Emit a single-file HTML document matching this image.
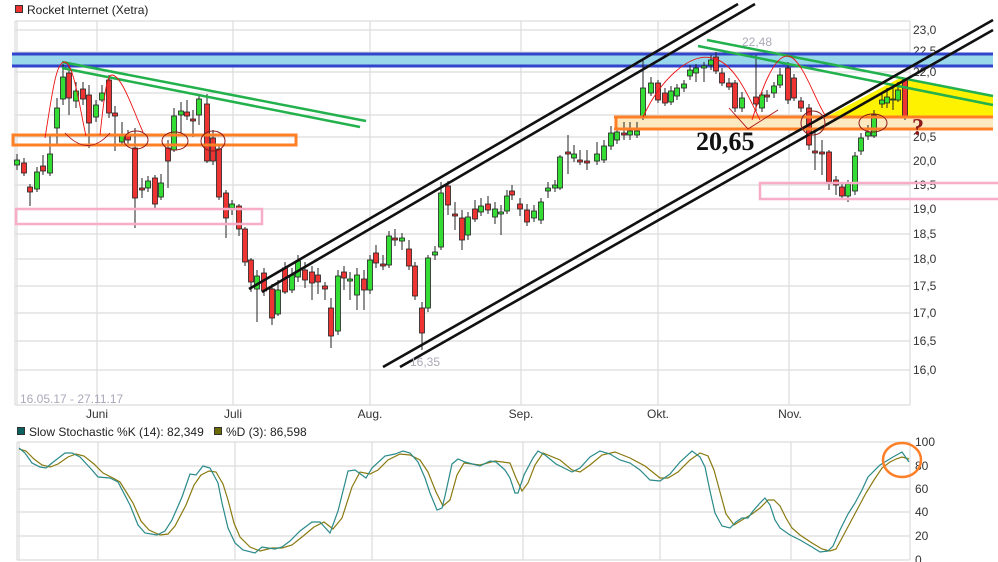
<!DOCTYPE html>
<html><head><meta charset="utf-8"><style>
html,body{margin:0;padding:0;background:#fff;width:998px;height:562px;overflow:hidden}
svg{display:block;font-family:"Liberation Sans",sans-serif}
.g{fill:#33dd33;stroke:#222;stroke-width:0.8}
.r{fill:#ee3333;stroke:#222;stroke-width:0.8}
.w{stroke:#222;stroke-width:1}
.grid{stroke:#dcdcdc;stroke-width:1.2}
.ax{font-size:12px;fill:#333}
</style></head><body>
<svg width="998" height="562" viewBox="0 0 998 562">
<rect x="15.5" y="5.5" width="7" height="7" fill="#e33" stroke="#333" stroke-width="1"/>
<text x="27" y="14" font-size="12" fill="#222">Rocket Internet (Xetra)</text>
<g class="grid">
<line x1="15" y1="21" x2="910" y2="21"/>
<line x1="15" y1="30" x2="910" y2="30"/><line x1="15" y1="52" x2="910" y2="52"/><line x1="15" y1="72" x2="910" y2="72"/><line x1="15" y1="93" x2="910" y2="93"/><line x1="15" y1="115" x2="910" y2="115"/><line x1="15" y1="137" x2="910" y2="137"/><line x1="15" y1="162" x2="910" y2="162"/><line x1="15" y1="185" x2="910" y2="185"/><line x1="15" y1="209" x2="910" y2="209"/><line x1="15" y1="234" x2="910" y2="234"/><line x1="15" y1="259" x2="910" y2="259"/><line x1="15" y1="286" x2="910" y2="286"/><line x1="15" y1="313" x2="910" y2="313"/><line x1="15" y1="341" x2="910" y2="341"/><line x1="15" y1="370" x2="910" y2="370"/>
<line x1="15" y1="405" x2="910" y2="405"/>
<line x1="15" y1="21" x2="15" y2="405"/><line x1="17" y1="21" x2="17" y2="405"/>
<line x1="97" y1="21" x2="97" y2="405"/><line x1="233" y1="21" x2="233" y2="405"/><line x1="370" y1="21" x2="370" y2="405"/><line x1="521" y1="21" x2="521" y2="405"/><line x1="658" y1="21" x2="658" y2="405"/><line x1="789" y1="21" x2="789" y2="405"/><line x1="910" y1="21" x2="910" y2="405"/>
</g>
<g class="ax">
<text x="913" y="34">23,0</text><text x="913" y="55">22,5</text><text x="913" y="76">22,0</text><text x="913" y="97">21,5</text><text x="913" y="119">21,0</text><text x="913" y="141">20,5</text><text x="913" y="165">20,0</text><text x="913" y="189">19,5</text><text x="913" y="213">19,0</text><text x="913" y="238">18,5</text><text x="913" y="263">18,0</text><text x="913" y="290">17,5</text><text x="913" y="317">17,0</text><text x="913" y="345">16,5</text><text x="913" y="374">16,0</text>
</g>
<g class="ax" text-anchor="middle">
<text x="97" y="418">Juni</text><text x="233" y="418">Juli</text><text x="370" y="418">Aug.</text><text x="521" y="418">Sep.</text><text x="658" y="418">Okt.</text><text x="790" y="418">Nov.</text>
</g>
<text x="20" y="403" font-size="12" fill="#a9a9b9">16.05.17 - 27.11.17</text>

<rect x="12" y="54" width="981" height="12" fill="#99d8ea"/>
<line x1="12" y1="54" x2="993" y2="54" stroke="#3344cc" stroke-width="3"/>
<line x1="12" y1="66" x2="993" y2="66" stroke="#3344cc" stroke-width="3"/>
<rect x="616" y="117" width="377" height="12" fill="#fde9c0"/>
<polygon points="826,117 900,78 993,96 993,117" fill="#fff200"/>

<g id="c">
<line class="w" x1="17" y1="154" x2="17" y2="170"/><rect class="g" x="14.5" y="160" width="5" height="5"/>
<line class="w" x1="24" y1="158" x2="24" y2="176"/><rect class="r" x="21.5" y="163" width="5" height="10"/>
<line class="w" x1="30" y1="184" x2="30" y2="206"/><rect class="r" x="27.5" y="187" width="5" height="5"/>
<line class="w" x1="37" y1="167" x2="37" y2="192"/><rect class="g" x="34.5" y="172" width="5" height="17"/>
<line class="w" x1="43" y1="155" x2="43" y2="175"/><rect class="r" x="40.5" y="166" width="5" height="5"/>
<line class="w" x1="50" y1="135" x2="50" y2="176"/><rect class="g" x="47.5" y="154" width="5" height="19"/>
<line class="w" x1="57" y1="98" x2="57" y2="144"/><rect class="g" x="54.5" y="108" width="5" height="20"/>
<line class="w" x1="63" y1="64" x2="63" y2="105"/><rect class="g" x="60.5" y="77" width="5" height="22"/>
<line class="w" x1="69" y1="66" x2="69" y2="115"/><rect class="r" x="66.5" y="73" width="5" height="25"/>
<line class="w" x1="76" y1="82" x2="76" y2="108"/><rect class="g" x="73.5" y="91" width="5" height="10"/>
<line class="w" x1="83" y1="82" x2="83" y2="105"/><rect class="r" x="80.5" y="89" width="5" height="10"/>
<line class="w" x1="89" y1="85" x2="89" y2="148"/><rect class="r" x="86.5" y="95" width="5" height="28"/>
<line class="w" x1="96" y1="100" x2="96" y2="122"/><rect class="g" x="93.5" y="105" width="5" height="12"/>
<line class="w" x1="102" y1="85" x2="102" y2="102"/><rect class="g" x="99.5" y="93" width="5" height="7"/>
<line class="w" x1="109" y1="75" x2="109" y2="118"/><rect class="r" x="106.5" y="80" width="5" height="33"/>
<line class="w" x1="115" y1="106" x2="115" y2="151"/><rect class="r" x="112.5" y="113" width="5" height="3"/>
<line class="w" x1="122" y1="122" x2="122" y2="146"/><rect class="g" x="119.5" y="136" width="5" height="6"/>
<line class="w" x1="128" y1="130" x2="128" y2="144"/><rect class="r" x="125.5" y="136" width="5" height="4"/>
<line class="w" x1="135" y1="128" x2="135" y2="228"/><rect class="r" x="132.5" y="148" width="5" height="50"/>
<line class="w" x1="142" y1="178" x2="142" y2="198"/><rect class="r" x="139.5" y="188" width="5" height="2"/>
<line class="w" x1="148" y1="176" x2="148" y2="192"/><rect class="g" x="145.5" y="181" width="5" height="7"/>
<line class="w" x1="155" y1="175" x2="155" y2="208"/><rect class="r" x="152.5" y="178" width="5" height="26"/>
<line class="w" x1="161" y1="174" x2="161" y2="200"/><rect class="g" x="158.5" y="183" width="5" height="14"/>
<line class="w" x1="168" y1="140" x2="168" y2="188"/><rect class="r" x="165.5" y="148" width="5" height="13"/>
<line class="w" x1="174" y1="108" x2="174" y2="152"/><rect class="g" x="171.5" y="116" width="5" height="34"/>
<line class="w" x1="181" y1="102" x2="181" y2="133"/><rect class="g" x="178.5" y="111" width="5" height="4"/>
<line class="w" x1="187" y1="100" x2="187" y2="120"/><rect class="r" x="184.5" y="112" width="5" height="4"/>
<line class="w" x1="193" y1="110" x2="193" y2="137"/><rect class="r" x="190.5" y="119" width="5" height="2"/>
<line class="w" x1="199" y1="94" x2="199" y2="125"/><rect class="g" x="196.5" y="99" width="5" height="16"/>
<line class="w" x1="207" y1="94" x2="207" y2="163"/><rect class="r" x="204.5" y="104" width="5" height="57"/>
<line class="w" x1="213" y1="130" x2="213" y2="165"/><rect class="r" x="210.5" y="138" width="5" height="23"/>
<line class="w" x1="219" y1="146" x2="219" y2="200"/><rect class="r" x="216.5" y="149" width="5" height="48"/>
<line class="w" x1="226" y1="190" x2="226" y2="238"/><rect class="r" x="223.5" y="193" width="5" height="25"/>
<line class="w" x1="232" y1="200" x2="232" y2="215"/><rect class="g" x="229.5" y="204" width="5" height="4"/>
<line class="w" x1="239" y1="204" x2="239" y2="236"/><rect class="r" x="236.5" y="206" width="5" height="23"/>
<line class="w" x1="245" y1="227" x2="245" y2="266"/><rect class="r" x="242.5" y="229" width="5" height="33"/>
<line class="w" x1="251" y1="258" x2="251" y2="292"/><rect class="r" x="248.5" y="260" width="5" height="22"/>
<line class="w" x1="257" y1="270" x2="257" y2="322"/><rect class="g" x="254.5" y="276" width="5" height="13"/>
<line class="w" x1="264" y1="268" x2="264" y2="296"/><rect class="r" x="261.5" y="273" width="5" height="18"/>
<line class="w" x1="272" y1="284" x2="272" y2="325"/><rect class="r" x="269.5" y="289" width="5" height="29"/>
<line class="w" x1="278" y1="280" x2="278" y2="316"/><rect class="g" x="275.5" y="290" width="5" height="24"/>
<line class="w" x1="285" y1="262" x2="285" y2="294"/><rect class="r" x="282.5" y="268" width="5" height="24"/>
<line class="w" x1="292" y1="268" x2="292" y2="293"/><rect class="g" x="289.5" y="275" width="5" height="15"/>
<line class="w" x1="298" y1="255" x2="298" y2="282"/><rect class="g" x="295.5" y="261" width="5" height="16"/>
<line class="w" x1="305" y1="262" x2="305" y2="288"/><rect class="r" x="302.5" y="270" width="5" height="10"/>
<line class="w" x1="312" y1="266" x2="312" y2="300"/><rect class="r" x="309.5" y="272" width="5" height="11"/>
<line class="w" x1="318" y1="268" x2="318" y2="294"/><rect class="r" x="315.5" y="275" width="5" height="7"/>
<line class="w" x1="325" y1="282" x2="325" y2="300"/><rect class="r" x="322.5" y="286" width="5" height="3"/>
<line class="w" x1="331" y1="298" x2="331" y2="348"/><rect class="r" x="328.5" y="308" width="5" height="28"/>
<line class="w" x1="338" y1="270" x2="338" y2="335"/><rect class="g" x="335.5" y="276" width="5" height="55"/>
<line class="w" x1="344" y1="266" x2="344" y2="290"/><rect class="r" x="341.5" y="272" width="5" height="6"/>
<line class="w" x1="350" y1="272" x2="350" y2="300"/><rect class="g" x="347.5" y="279" width="5" height="2"/>
<line class="w" x1="357" y1="268" x2="357" y2="310"/><rect class="g" x="354.5" y="275" width="5" height="20"/>
<line class="w" x1="364" y1="270" x2="364" y2="310"/><rect class="r" x="361.5" y="279" width="5" height="11"/>
<line class="w" x1="370" y1="255" x2="370" y2="294"/><rect class="g" x="367.5" y="260" width="5" height="30"/>
<line class="w" x1="376" y1="245" x2="376" y2="268"/><rect class="r" x="373.5" y="253" width="5" height="10"/>
<line class="w" x1="383" y1="255" x2="383" y2="270"/><rect class="r" x="380.5" y="264" width="5" height="2"/>
<line class="w" x1="389" y1="231" x2="389" y2="268"/><rect class="g" x="386.5" y="236" width="5" height="29"/>
<line class="w" x1="395" y1="229" x2="395" y2="246"/><rect class="r" x="392.5" y="238" width="5" height="2"/>
<line class="w" x1="402" y1="233" x2="402" y2="250"/><rect class="g" x="399.5" y="238" width="5" height="3"/>
<line class="w" x1="409" y1="240" x2="409" y2="270"/><rect class="r" x="406.5" y="249" width="5" height="17"/>
<line class="w" x1="415" y1="262" x2="415" y2="300"/><rect class="r" x="412.5" y="266" width="5" height="30"/>
<line class="w" x1="422" y1="302" x2="422" y2="350"/><rect class="r" x="419.5" y="308" width="5" height="25"/>
<line class="w" x1="428" y1="255" x2="428" y2="312"/><rect class="g" x="425.5" y="258" width="5" height="50"/>
<line class="w" x1="435" y1="246" x2="435" y2="260"/><rect class="g" x="432.5" y="252" width="5" height="3"/>
<line class="w" x1="441" y1="182" x2="441" y2="250"/><rect class="g" x="438.5" y="193" width="5" height="54"/>
<line class="w" x1="448" y1="181" x2="448" y2="215"/><rect class="r" x="445.5" y="186" width="5" height="19"/>
<line class="w" x1="455" y1="202" x2="455" y2="230"/><rect class="r" x="452.5" y="214" width="5" height="2"/>
<line class="w" x1="462" y1="210" x2="462" y2="250"/><rect class="r" x="459.5" y="218" width="5" height="22"/>
<line class="w" x1="468" y1="212" x2="468" y2="240"/><rect class="g" x="465.5" y="217" width="5" height="18"/>
<line class="w" x1="475" y1="200" x2="475" y2="222"/><rect class="r" x="472.5" y="209" width="5" height="10"/>
<line class="w" x1="481" y1="198" x2="481" y2="216"/><rect class="g" x="478.5" y="206" width="5" height="6"/>
<line class="w" x1="488" y1="196" x2="488" y2="214"/><rect class="r" x="485.5" y="204" width="5" height="6"/>
<line class="w" x1="495" y1="202" x2="495" y2="224"/><rect class="g" x="492.5" y="209" width="5" height="8"/>
<line class="w" x1="501" y1="205" x2="501" y2="235"/><rect class="g" x="498.5" y="212" width="5" height="2"/>
<line class="w" x1="507" y1="190" x2="507" y2="214"/><rect class="g" x="504.5" y="196" width="5" height="15"/>
<line class="w" x1="512" y1="185" x2="512" y2="200"/><rect class="r" x="509.5" y="191" width="5" height="4"/>
<line class="w" x1="520" y1="198" x2="520" y2="216"/><rect class="r" x="517.5" y="204" width="5" height="5"/>
<line class="w" x1="527" y1="204" x2="527" y2="226"/><rect class="r" x="524.5" y="210" width="5" height="12"/>
<line class="w" x1="534" y1="205" x2="534" y2="222"/><rect class="g" x="531.5" y="211" width="5" height="7"/>
<line class="w" x1="541" y1="198" x2="541" y2="224"/><rect class="g" x="538.5" y="202" width="5" height="18"/>
<line class="w" x1="548" y1="182" x2="548" y2="198"/><rect class="g" x="545.5" y="188" width="5" height="3"/>
<line class="w" x1="555" y1="180" x2="555" y2="192"/><rect class="g" x="552.5" y="185" width="5" height="3"/>
<line class="w" x1="560" y1="155" x2="560" y2="190"/><rect class="g" x="557.5" y="157" width="5" height="31"/>
<line class="w" x1="568" y1="135" x2="568" y2="174"/><rect class="r" x="565.5" y="152" width="5" height="2"/>
<line class="w" x1="574" y1="145" x2="574" y2="162"/><rect class="g" x="571.5" y="154" width="5" height="4"/>
<line class="w" x1="580" y1="150" x2="580" y2="165"/><rect class="r" x="577.5" y="160" width="5" height="2"/>
<line class="w" x1="587" y1="150" x2="587" y2="170"/><rect class="r" x="584.5" y="161" width="5" height="2"/>
<line class="w" x1="597" y1="142" x2="597" y2="165"/><rect class="g" x="594.5" y="154" width="5" height="7"/>
<line class="w" x1="604" y1="140" x2="604" y2="163"/><rect class="g" x="601.5" y="146" width="5" height="14"/>
<line class="w" x1="611" y1="126" x2="611" y2="150"/><rect class="g" x="608.5" y="133" width="5" height="13"/>
<line class="w" x1="617" y1="126" x2="617" y2="144"/><rect class="g" x="614.5" y="132" width="5" height="8"/>
<line class="w" x1="624" y1="122" x2="624" y2="140"/><rect class="r" x="621.5" y="133" width="5" height="2"/>
<line class="w" x1="630" y1="122" x2="630" y2="140"/><rect class="g" x="627.5" y="131" width="5" height="4"/>
<line class="w" x1="637" y1="122" x2="637" y2="138"/><rect class="g" x="634.5" y="131" width="5" height="4"/>
<line class="w" x1="643" y1="60" x2="643" y2="120"/><rect class="g" x="640.5" y="88" width="5" height="29"/>
<line class="w" x1="651" y1="77" x2="651" y2="96"/><rect class="g" x="648.5" y="83" width="5" height="10"/>
<line class="w" x1="658" y1="80" x2="658" y2="103"/><rect class="r" x="655.5" y="83" width="5" height="17"/>
<line class="w" x1="665" y1="88" x2="665" y2="106"/><rect class="r" x="662.5" y="93" width="5" height="10"/>
<line class="w" x1="671" y1="86" x2="671" y2="105"/><rect class="g" x="668.5" y="91" width="5" height="11"/>
<line class="w" x1="677" y1="84" x2="677" y2="100"/><rect class="g" x="674.5" y="88" width="5" height="8"/>
<line class="w" x1="684" y1="80" x2="684" y2="92"/><rect class="g" x="681.5" y="84" width="5" height="4"/>
<line class="w" x1="690" y1="65" x2="690" y2="80"/><rect class="g" x="687.5" y="70" width="5" height="6"/>
<line class="w" x1="696" y1="64" x2="696" y2="82"/><rect class="g" x="693.5" y="68" width="5" height="5"/>
<line class="w" x1="704" y1="62" x2="704" y2="82"/><rect class="g" x="701.5" y="66" width="5" height="2"/>
<line class="w" x1="711" y1="55" x2="711" y2="70"/><rect class="g" x="708.5" y="60" width="5" height="5"/>
<line class="w" x1="716" y1="52" x2="716" y2="74"/><rect class="r" x="713.5" y="57" width="5" height="14"/>
<line class="w" x1="722" y1="68" x2="722" y2="86"/><rect class="r" x="719.5" y="73" width="5" height="10"/>
<line class="w" x1="729" y1="78" x2="729" y2="90"/><rect class="r" x="726.5" y="83" width="5" height="4"/>
<line class="w" x1="735" y1="80" x2="735" y2="112"/><rect class="r" x="732.5" y="83" width="5" height="25"/>
<line class="w" x1="742" y1="92" x2="742" y2="112"/><rect class="g" x="739.5" y="98" width="5" height="10"/>
<line class="w" x1="756" y1="55" x2="756" y2="112"/><rect class="r" x="753.5" y="97" width="5" height="7"/>
<line class="w" x1="762" y1="92" x2="762" y2="112"/><rect class="g" x="759.5" y="95" width="5" height="13"/>
<line class="w" x1="767" y1="90" x2="767" y2="102"/><rect class="r" x="764.5" y="95" width="5" height="2"/>
<line class="w" x1="774" y1="82" x2="774" y2="98"/><rect class="g" x="771.5" y="86" width="5" height="7"/>
<line class="w" x1="780" y1="68" x2="780" y2="88"/><rect class="g" x="777.5" y="75" width="5" height="10"/>
<line class="w" x1="788" y1="62" x2="788" y2="104"/><rect class="r" x="785.5" y="68" width="5" height="32"/>
<line class="w" x1="794" y1="74" x2="794" y2="101"/><rect class="r" x="791.5" y="78" width="5" height="20"/>
<line class="w" x1="801" y1="97" x2="801" y2="112"/><rect class="r" x="798.5" y="101" width="5" height="7"/>
<line class="w" x1="809" y1="104" x2="809" y2="150"/><rect class="r" x="806.5" y="108" width="5" height="37"/>
<line class="w" x1="815" y1="130" x2="815" y2="170"/><rect class="r" x="812.5" y="151" width="5" height="2"/>
<line class="w" x1="822" y1="140" x2="822" y2="175"/><rect class="r" x="819.5" y="152" width="5" height="2"/>
<line class="w" x1="829" y1="150" x2="829" y2="190"/><rect class="r" x="826.5" y="152" width="5" height="30"/>
<line class="w" x1="836" y1="176" x2="836" y2="195"/><rect class="r" x="833.5" y="180" width="5" height="5"/>
<line class="w" x1="842" y1="184" x2="842" y2="198"/><rect class="r" x="839.5" y="187" width="5" height="9"/>
<line class="w" x1="848" y1="180" x2="848" y2="202"/><rect class="g" x="845.5" y="184" width="5" height="12"/>
<line class="w" x1="855" y1="152" x2="855" y2="195"/><rect class="g" x="852.5" y="156" width="5" height="35"/>
<line class="w" x1="861" y1="133" x2="861" y2="155"/><rect class="g" x="858.5" y="138" width="5" height="13"/>
<line class="w" x1="868" y1="125" x2="868" y2="140"/><rect class="g" x="865.5" y="132" width="5" height="4"/>
<line class="w" x1="874" y1="110" x2="874" y2="138"/><rect class="g" x="871.5" y="115" width="5" height="21"/>
<line class="w" x1="882" y1="92" x2="882" y2="108"/><rect class="g" x="879.5" y="100" width="5" height="4"/>
<line class="w" x1="887" y1="88" x2="887" y2="108"/><rect class="g" x="884.5" y="97" width="5" height="6"/>
<line class="w" x1="893" y1="85" x2="893" y2="110"/><rect class="g" x="890.5" y="99" width="5" height="1"/>
<line class="w" x1="898" y1="82" x2="898" y2="102"/><rect class="g" x="895.5" y="90" width="5" height="10"/>
<line class="w" x1="905" y1="78" x2="905" y2="120"/><rect class="r" x="902.5" y="80" width="5" height="36"/>
</g>

<rect x="13" y="135" width="283" height="10" fill="none" stroke="#ff7f27" stroke-width="3"/>
<line x1="614" y1="117" x2="993" y2="117" stroke="#ff7f27" stroke-width="3"/>
<line x1="614" y1="129" x2="993" y2="129" stroke="#ff7f27" stroke-width="3"/>
<line x1="616" y1="117" x2="616" y2="129" stroke="#ff7f27" stroke-width="3"/>
<rect x="16" y="209" width="246" height="15" fill="none" stroke="#f7adc8" stroke-width="2.5"/>
<rect x="760" y="183" width="240" height="16" fill="none" stroke="#f7adc8" stroke-width="2.5"/>
<g stroke="#22b14c" stroke-width="2.5">
<line x1="62" y1="62" x2="366" y2="121"/><line x1="62" y1="68" x2="360" y2="127"/>
<line x1="707" y1="40" x2="993" y2="96"/><line x1="698" y1="46" x2="993" y2="105"/>
</g>
<g stroke="#111" stroke-width="2.6">
<line x1="249" y1="289" x2="738" y2="4"/><line x1="262" y1="292" x2="755" y2="4"/>
<line x1="383" y1="367" x2="993" y2="20"/><line x1="400" y1="367" x2="993" y2="30"/>
</g>
<g fill="none" stroke="#ee1111" stroke-width="0.9">
<path d="M45,138 C52,95 56,60 65,62 C74,64 80,110 86,136"/>
<path d="M100,135 C104,100 106,75 112,75 C122,75 135,115 143,132"/>
<path d="M643,117 C660,80 690,52 712,58 C735,62 750,100 760,120"/>
<path d="M752,120 C760,95 773,55 788,56 C802,58 815,100 825,115"/>
<path d="M729,108 L748,129 L778,110" stroke="#aa1111"/>
<path d="M65,133 Q88,158 110,133" stroke="#aa1111"/>
</g>
<g fill="none" stroke="#8b1a1a" stroke-width="1">
<ellipse cx="136" cy="140" rx="12" ry="9"/><ellipse cx="175" cy="141" rx="13" ry="9"/><ellipse cx="213" cy="141" rx="12" ry="10"/>
<ellipse cx="813" cy="123" rx="12" ry="12"/><ellipse cx="873" cy="123" rx="14" ry="9"/>
</g>
<text x="696" y="150" font-size="26" font-weight="bold" fill="#111" font-family="'Liberation Serif',serif">20,65</text>
<text x="912" y="135" font-size="24" font-weight="bold" fill="#8b1a1a" font-family="'Liberation Serif',serif">?</text>
<text x="742" y="46" font-size="12" fill="#aaaab8">22,48</text>
<text x="410" y="366" font-size="12" fill="#aaaab8">16,35</text>

<rect x="17.5" y="427.5" width="7" height="7" fill="#0b6060" stroke="#333" stroke-width="1"/>
<text x="29" y="436" font-size="12" fill="#222">Slow Stochastic %K (14): 82,349</text>
<rect x="214.5" y="427.5" width="7" height="7" fill="#6b6a00" stroke="#333" stroke-width="1"/>
<text x="226" y="436" font-size="12" fill="#222">%D (3): 86,598</text>
<g class="grid">
<line x1="17" y1="442" x2="910" y2="442"/><line x1="17" y1="466" x2="910" y2="466"/><line x1="17" y1="489" x2="910" y2="489"/><line x1="17" y1="512" x2="910" y2="512"/><line x1="17" y1="536" x2="910" y2="536"/><line x1="17" y1="560" x2="910" y2="560"/>
<line x1="17" y1="442" x2="17" y2="560"/><line x1="19" y1="442" x2="19" y2="560"/><line x1="98" y1="442" x2="98" y2="560"/><line x1="235" y1="442" x2="235" y2="560"/><line x1="372" y1="442" x2="372" y2="560"/><line x1="523" y1="442" x2="523" y2="560"/><line x1="660" y1="442" x2="660" y2="560"/><line x1="791" y1="442" x2="791" y2="560"/><line x1="910" y1="442" x2="910" y2="560"/>
</g>
<g class="ax">
<text x="915" y="446">100</text><text x="915" y="470">80</text><text x="915" y="493">60</text><text x="915" y="516">40</text><text x="915" y="540">20</text><text x="915" y="564">0</text>
</g>
<polyline fill="none" stroke="#8a7a10" stroke-width="1.2" points="19,449 26,451 34,459 42,465 50,467 58,464 68,457 76,454 84,456 94,464 103,473 113,478 120,482 133,503 141,521 149,530 160,535 168,534 175,526 186,505 194,485 201,475 209,471 216,472 223,484 228,500 234,523 240,537 250,547 260,551 272,548 282,548 292,545 302,537 314,527 324,522 333,529 342,518 352,487 360,472 370,474 378,470 388,460 400,454 410,455 420,460 428,472 436,492 443,506 450,500 457,475 464,463 480,465 495,461 510,463 516,478 522,491 528,483 535,465 543,453 560,460 572,470 580,472 590,465 602,455 615,452 630,458 645,466 660,478 668,478 678,472 690,460 700,453 708,456 714,470 720,492 726,514 734,525 742,520 752,514 760,508 768,500 774,500 780,506 786,518 792,528 800,535 812,543 822,549 830,551 836,549 842,538 850,523 858,508 866,493 874,480 882,468 890,462 896,459 902,457 909,459"/>
<polyline fill="none" stroke="#2a8a8a" stroke-width="1.2" points="19,448 25,453 32,463 40,467 46,468 52,463 65,453 72,453 80,457 92,470 98,477 110,478 118,482 130,505 138,525 145,533 157,535 165,531 172,520 182,497 190,474 196,475 203,466 210,468 218,483 222,503 228,528 235,543 243,550 255,553 262,547 268,548 275,549 282,547 290,541 300,531 312,522 320,522 330,533 338,511 348,471 355,470 366,478 372,468 385,456 395,454 403,451 410,453 418,462 425,478 430,493 437,510 442,508 445,496 452,464 458,459 465,462 480,466 490,461 496,462 505,470 510,478 515,493 518,493 524,475 533,458 538,451 545,455 556,464 566,469 572,472 580,468 590,457 600,451 610,454 620,460 630,463 640,470 650,480 660,481 670,474 680,462 692,451 700,457 705,467 710,491 715,513 722,526 730,528 736,522 742,518 748,518 753,511 760,503 765,498 770,505 775,520 780,528 790,535 800,540 812,547 820,552 828,551 833,546 840,530 848,514 855,503 862,490 868,477 880,465 893,457 902,452 909,462"/>
<ellipse cx="902" cy="460" rx="19" ry="17" fill="none" stroke="#ff7f27" stroke-width="2.5"/>
</svg>
</body></html>
